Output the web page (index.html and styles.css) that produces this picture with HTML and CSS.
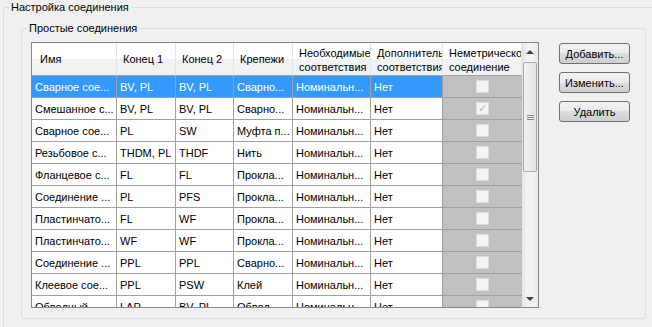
FILE: index.html
```html
<!DOCTYPE html>
<html lang="ru">
<head>
    <meta charset="UTF-8">
    <title>Настройка соединения</title>
    <link rel="stylesheet" href="styles.css">
</head>
<body>
    <fieldset class="group group-main">
        <legend>Настройка соединения</legend>
        <div class="main-body">
            <fieldset class="group group-simple">
                <legend>Простые соединения</legend>
                <div class="simple-body">
                    <div class="grid">
                        <div class="grid-table">
                            <div class="grid-row grid-head">
                                <div class="cell">Имя</div>
                                <div class="cell">Конец 1</div>
                                <div class="cell">Конец 2</div>
                                <div class="cell">Крепежи</div>
                                <div class="cell two-line"><span>Необходимые</span><span>соответствия</span></div>
                                <div class="cell two-line"><span>Дополнительные</span><span>соответствия</span></div>
                                <div class="cell two-line"><span>Неметрическое</span><span>соединение</span></div>
                            </div>
                            <div class="grid-row selected">
                                <div class="cell">Сварное сое...</div>
                                <div class="cell">BV, PL</div>
                                <div class="cell">BV, PL</div>
                                <div class="cell">Сварно...</div>
                                <div class="cell">Номинальн...</div>
                                <div class="cell">Нет</div>
                                <div class="cell check-cell"><span class="check"></span></div>
                            </div>
                            <div class="grid-row">
                                <div class="cell">Смешанное с...</div>
                                <div class="cell">BV, PL</div>
                                <div class="cell">BV, PL</div>
                                <div class="cell">Сварно...</div>
                                <div class="cell">Номинальн...</div>
                                <div class="cell">Нет</div>
                                <div class="cell check-cell"><span class="check checked">&#10003;</span></div>
                            </div>
                            <div class="grid-row">
                                <div class="cell">Сварное сое...</div>
                                <div class="cell">PL</div>
                                <div class="cell">SW</div>
                                <div class="cell">Муфта п...</div>
                                <div class="cell">Номинальн...</div>
                                <div class="cell">Нет</div>
                                <div class="cell check-cell"><span class="check"></span></div>
                            </div>
                            <div class="grid-row">
                                <div class="cell">Резьбовое с...</div>
                                <div class="cell">THDM, PL</div>
                                <div class="cell">THDF</div>
                                <div class="cell">Нить</div>
                                <div class="cell">Номинальн...</div>
                                <div class="cell">Нет</div>
                                <div class="cell check-cell"><span class="check"></span></div>
                            </div>
                            <div class="grid-row">
                                <div class="cell">Фланцевое с...</div>
                                <div class="cell">FL</div>
                                <div class="cell">FL</div>
                                <div class="cell">Прокла...</div>
                                <div class="cell">Номинальн...</div>
                                <div class="cell">Нет</div>
                                <div class="cell check-cell"><span class="check"></span></div>
                            </div>
                            <div class="grid-row">
                                <div class="cell">Соединение ...</div>
                                <div class="cell">PL</div>
                                <div class="cell">PFS</div>
                                <div class="cell">Прокла...</div>
                                <div class="cell">Номинальн...</div>
                                <div class="cell">Нет</div>
                                <div class="cell check-cell"><span class="check"></span></div>
                            </div>
                            <div class="grid-row">
                                <div class="cell">Пластинчато...</div>
                                <div class="cell">FL</div>
                                <div class="cell">WF</div>
                                <div class="cell">Прокла...</div>
                                <div class="cell">Номинальн...</div>
                                <div class="cell">Нет</div>
                                <div class="cell check-cell"><span class="check"></span></div>
                            </div>
                            <div class="grid-row">
                                <div class="cell">Пластинчато...</div>
                                <div class="cell">WF</div>
                                <div class="cell">WF</div>
                                <div class="cell">Прокла...</div>
                                <div class="cell">Номинальн...</div>
                                <div class="cell">Нет</div>
                                <div class="cell check-cell"><span class="check"></span></div>
                            </div>
                            <div class="grid-row">
                                <div class="cell">Соединение ...</div>
                                <div class="cell">PPL</div>
                                <div class="cell">PPL</div>
                                <div class="cell">Сварно...</div>
                                <div class="cell">Номинальн...</div>
                                <div class="cell">Нет</div>
                                <div class="cell check-cell"><span class="check"></span></div>
                            </div>
                            <div class="grid-row">
                                <div class="cell">Клеевое сое...</div>
                                <div class="cell">PPL</div>
                                <div class="cell">PSW</div>
                                <div class="cell">Клей</div>
                                <div class="cell">Номинальн...</div>
                                <div class="cell">Нет</div>
                                <div class="cell check-cell"><span class="check"></span></div>
                            </div>
                            <div class="grid-row">
                                <div class="cell">Обводный ...</div>
                                <div class="cell">LAP</div>
                                <div class="cell">BV, PL</div>
                                <div class="cell">Обвод...</div>
                                <div class="cell">Номинальн...</div>
                                <div class="cell">Нет</div>
                                <div class="cell check-cell"><span class="check"></span></div>
                            </div>
                        </div>
                        <div class="scrollbar">
                            <div class="scroll-btn"><span class="arrow-up"></span></div>
                            <div class="scroll-track">
                                <div class="scroll-thumb"><span class="grip"></span></div>
                            </div>
                            <div class="scroll-btn"><span class="arrow-down"></span></div>
                        </div>
                    </div>
                    <div class="actions">
                        <button class="btn">Добавить...</button>
                        <button class="btn">Изменить...</button>
                        <button class="btn">Удалить</button>
                    </div>
                </div>
            </fieldset>
        </div>
    </fieldset>
</body>
</html>
```

FILE: styles.css
```css
html, body {
    margin: 0;
    overflow: hidden;
}
body {
    background-color: #f0f0f0;
    font-family: 'Liberation Sans', Arial, sans-serif;
    font-size: 11px;
    line-height: 14px;
    color: #000;
}
.group {
    box-sizing: border-box;
    min-width: 0;
    padding: 0;
    border: 1px solid #d5dfe5;
    border-radius: 3px;
}
.group legend {
    margin-left: 5px;
    padding: 0 2px;
    line-height: 14px;
}
.group-main {
    width: 660px;
    height: 340px;
    margin: 0 0 0 3px;
}
.main-body {
    padding: 7px 0 0 17px;
}
.group-simple {
    width: 625px;
    height: 298px;
    margin: 0;
}
.simple-body {
    display: flex;
    gap: 20px;
    padding: 7px 0 0 9px;
}
.grid {
    display: flex;
    box-sizing: border-box;
    width: 508px;
    height: 266px;
    border: 1px solid #828790;
    background: #fff;
    overflow: hidden;
}
.grid-table {
    width: 490px;
    flex: none;
}
.grid-row {
    display: grid;
    grid-template-columns: 85px 59px 58px 59px 78px 72px 79px;
    height: 22px;
}
.cell {
    box-sizing: border-box;
    border-right: 1px solid #a0a0a0;
    border-bottom: 1px solid #a0a0a0;
    padding: 0 0 0 3px;
    white-space: nowrap;
    overflow: hidden;
    display: flex;
    align-items: center;
}
.cell:last-child {
    border-right: none;
}
.grid-head {
    height: 33px;
    background: linear-gradient(#ffffff 0, #ffffff 50%, #f1f2f4 50%, #f1f2f4 100%);
}
.grid-head .cell {
    border-right: 1px solid #e3e5e8;
    border-bottom: 1px solid #a0a0a0;
    padding-left: 6px;
}
.grid-head .cell:first-child {
    padding-left: 8px;
}
.grid-head .two-line {
    flex-direction: column;
    align-items: flex-start;
    justify-content: center;
    padding-top: 1px;
}
.selected .cell {
    background: #3399ff;
    color: #fff;
}
.grid-row .check-cell {
    background: #c0c0c0;
    justify-content: center;
    padding: 0;
}
.check {
    box-sizing: border-box;
    width: 13px;
    height: 13px;
    border: 1px solid #dcdcdc;
    background: #f4f4f4;
    color: #b5b5b5;
    font-size: 11px;
    line-height: 11px;
    text-align: center;
}
.scrollbar {
    display: flex;
    flex-direction: column;
    width: 16px;
    flex: none;
    background: linear-gradient(90deg, #e3e3e3, #f2f2f2 30%, #f2f2f2 70%, #e8e8e8);
}
.scroll-btn {
    height: 17px;
    display: flex;
    align-items: center;
    justify-content: center;
}
.arrow-up {
    border-left: 4px solid transparent;
    border-right: 4px solid transparent;
    border-bottom: 4px solid #404040;
}
.arrow-down {
    border-left: 4px solid transparent;
    border-right: 4px solid transparent;
    border-top: 4px solid #404040;
}
.scroll-track {
    flex: 1;
    padding-top: 2px;
}
.scroll-thumb {
    box-sizing: border-box;
    height: 110px;
    margin: 0 1px;
    border: 1px solid #a8a8a8;
    border-radius: 2px;
    background: linear-gradient(90deg, #f3f3f3, #e2e2e2);
    display: flex;
    align-items: center;
    justify-content: center;
}
.grip {
    width: 7px;
    height: 1px;
    background: #8a8a8a;
    box-shadow: 0 -2px 0 #8a8a8a, 0 2px 0 #8a8a8a;
}
.actions {
    display: flex;
    flex-direction: column;
    gap: 8px;
    padding-top: 1px;
}
.btn {
    width: 71px;
    height: 21px;
    padding: 0;
    border: 1px solid #707070;
    border-radius: 3px;
    background: linear-gradient(#f2f2f2 0, #ebebeb 50%, #dddddd 50%, #cfcfcf 100%);
    font-family: 'Liberation Sans', Arial, sans-serif;
    font-size: 11px;
    color: #000;
}
```
